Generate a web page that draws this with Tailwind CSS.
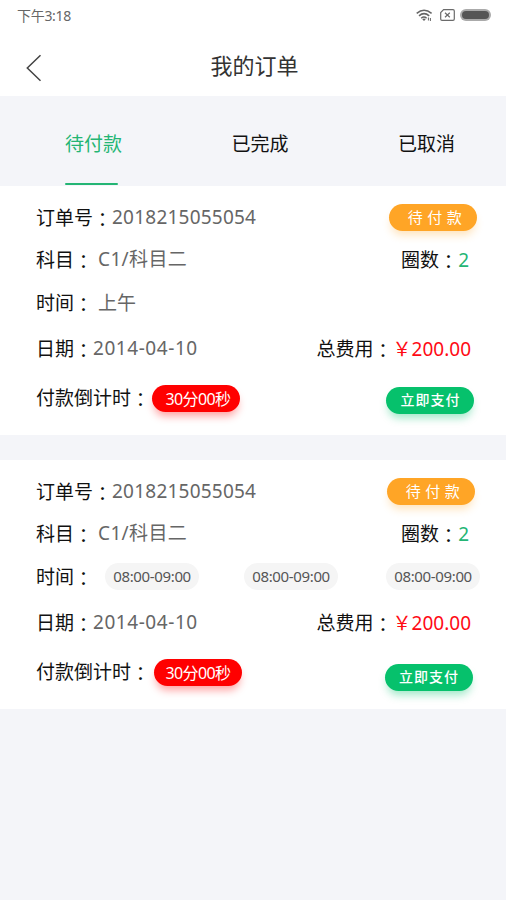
<!DOCTYPE html>
<html lang="zh-CN">
<head>
<meta charset="utf-8">
<meta name="viewport" content="width=device-width, initial-scale=1">
<title>我的订单</title>
<script src="https://cdn.jsdelivr.net/npm/@tailwindcss/browser@4"></script>
</head>
<body class="bg-[#f4f5f9] font-['Noto_Sans','Noto_Sans_CJK_SC',sans-serif] text-[19px] leading-none text-[#111] w-[506px] h-[900px] overflow-hidden">
<div class="bg-white h-[96px]">
  <div class="h-[31px] flex items-center pl-[17px] pr-[15px] text-[#666]">
    <span class="text-[14px] tracking-[-0.3px]">下午3:18</span>
    <svg class="ml-auto w-[17px] h-[13px]" viewBox="0 0 17 13" fill="none" stroke="#666" stroke-width="1.5">
      <path d="M.7 4.4Q8 -1.8 15.6 4.4M3 6.9Q8 2.4 13.2 6.9M5.2 9.2Q8 6.7 10.6 9.2"/>
      <path d="M6.3 10.2L8 12L9.7 10.2Q8 9 6.3 10.2Z" fill="#666" stroke="none"/>
      <path d="M12.4 8.5v3M14.4 9v3" stroke-width="1"/>
    </svg>
    <svg class="ml-[7px] w-[15px] h-[12px] -mt-px" viewBox="0 0 15 12" fill="none" stroke="#6b6b6b" stroke-width="1.2">
      <path d="M3.6.7H13Q14.3.7 14.3 2V10Q14.3 11.3 13 11.3H2Q.7 11.3.7 10V3.6Z"/>
      <path d="M5 3.8L9.8 8.2M9.8 3.8L5 8.2"/>
    </svg>
    <div class="ml-[5px] w-[31px] h-[12px] -mt-px rounded-full bg-[#aaa] p-[2px]"><div class="h-full rounded-full bg-[#555]"></div></div>
  </div>
  <div class="h-[68px] mt-px grid grid-cols-3 items-center pl-[26px] pr-[23px] text-[#333]">
    <svg class="w-[16px] h-[28px] mt-[4px]" viewBox="0 0 16 28" fill="none" stroke="#444" stroke-width="1.5"><path d="M14.5 1.2L1.3 14L14.5 26.8"/></svg>
    <h1 class="text-[22px] justify-self-center whitespace-nowrap -mt-[2px]">我的订单</h1>
  </div>
</div>
<nav class="h-[90px] flex justify-between pl-[65px] pr-[51px]">
  <div class="h-full flex flex-col items-start justify-between pt-[39px] text-[#24b574]">待付款<span class="w-[53px] h-[2px] mb-[1px] rounded-full bg-[#24b574]"></span></div>
  <div class="pt-[39px]">已完成</div>
  <div class="pt-[39px]">已取消</div>
</nav>

<section class="bg-white h-[249px] pt-[10px] pl-[36px]">
  <div class="h-[42px] flex items-center"><span>订单号<span lang="zh-TW" class="inline-block translate-y-[2px] font-['Noto_Sans_CJK_TC']">：</span></span><span class="text-[#666] tracking-[0.22px]">2018215055054</span>
    <span class="ml-auto mr-[29px] w-[88px] h-[27px] rounded-full bg-[#ffa526] shadow-[0_6px_9px_-2px_#ffa52650] text-white text-[15px] tracking-[4.5px] pl-[8px] flex items-center justify-center">待付款</span></div>
  <div class="h-[43px] flex items-center"><span>科目<span lang="zh-TW" class="inline-block translate-y-[2px] font-['Noto_Sans_CJK_TC']">：</span></span><span class="ml-[5px] text-[#666] tracking-[0.35px]">C1/科目二</span>
    <span class="ml-auto mr-[37px]">圈数<span lang="zh-TW" class="inline-block translate-y-[2px] font-['Noto_Sans_CJK_TC']">：</span><span class="text-[#24b574]">2</span></span></div>
  <div class="h-[43px] flex items-center"><span>时间<span lang="zh-TW" class="inline-block translate-y-[2px] font-['Noto_Sans_CJK_TC']">：</span></span><span class="ml-[5px] mt-[2px] text-[#666]">上午</span></div>
  <div class="h-[49px] flex items-center"><span>日期<span lang="zh-TW" class="inline-block translate-y-[2px] font-['Noto_Sans_CJK_TC']">：</span></span><span class="text-[#666] tracking-[0.55px]">2014-04-10</span>
    <span class="ml-auto mr-[35px]">总费用<span lang="zh-TW" class="inline-block translate-y-[2px] font-['Noto_Sans_CJK_TC']">：</span><span class="text-[#ff0a14]">￥200.00</span></span></div>
  <div class="h-[50px] flex items-center"><span class="-mt-[2px]">付款倒计时<span lang="zh-TW" class="inline-block translate-y-[2px] font-['Noto_Sans_CJK_TC']">：</span></span>
    <span class="ml-[2px] mt-[1px] w-[88px] h-[27px] rounded-full bg-[#ff0000] shadow-[0_6px_9px_-2px_#ff000060] text-white text-[16px] tracking-[-0.6px] pl-[4px] flex items-center justify-center">30分00秒</span>
    <span class="ml-auto mt-[4px] mr-[32px] w-[88px] h-[27px] rounded-full bg-[#06c16c] shadow-[0_6px_9px_-2px_#06c16c60] text-white text-[14px] font-medium tracking-[1px] pl-[1px] flex items-center justify-center">立即支付</span></div>
</section>

<section class="mt-[25px] bg-white h-[249px] pt-[10px] pl-[36px]">
  <div class="h-[42px] flex items-center"><span>订单号<span lang="zh-TW" class="inline-block translate-y-[2px] font-['Noto_Sans_CJK_TC']">：</span></span><span class="text-[#666] tracking-[0.22px]">2018215055054</span>
    <span class="ml-auto mr-[31px] w-[88px] h-[27px] rounded-full bg-[#ffa526] shadow-[0_6px_9px_-2px_#ffa52650] text-white text-[15px] tracking-[4.5px] pl-[8px] flex items-center justify-center">待付款</span></div>
  <div class="h-[43px] flex items-center"><span>科目<span lang="zh-TW" class="inline-block translate-y-[2px] font-['Noto_Sans_CJK_TC']">：</span></span><span class="ml-[5px] text-[#666] tracking-[0.35px]">C1/科目二</span>
    <span class="ml-auto mr-[37px]">圈数<span lang="zh-TW" class="inline-block translate-y-[2px] font-['Noto_Sans_CJK_TC']">：</span><span class="text-[#24b574]">2</span></span></div>
  <div class="h-[43px] flex items-center"><span>时间<span lang="zh-TW" class="inline-block translate-y-[2px] font-['Noto_Sans_CJK_TC']">：</span></span>
    <span class="ml-[12px] w-[94px] h-[27px] rounded-full bg-[#f5f5f5] text-[#555] text-[15px] tracking-[-0.35px] flex items-center justify-center">08:00-09:00</span>
    <span class="ml-[45px] w-[94px] h-[27px] rounded-full bg-[#f5f5f5] text-[#555] text-[15px] tracking-[-0.35px] flex items-center justify-center">08:00-09:00</span>
    <span class="ml-[48px] w-[94px] h-[27px] rounded-full bg-[#f5f5f5] text-[#555] text-[15px] tracking-[-0.35px] flex items-center justify-center">08:00-09:00</span></div>
  <div class="h-[49px] flex items-center"><span>日期<span lang="zh-TW" class="inline-block translate-y-[2px] font-['Noto_Sans_CJK_TC']">：</span></span><span class="text-[#666] tracking-[0.55px]">2014-04-10</span>
    <span class="ml-auto mr-[35px]">总费用<span lang="zh-TW" class="inline-block translate-y-[2px] font-['Noto_Sans_CJK_TC']">：</span><span class="text-[#ff0a14]">￥200.00</span></span></div>
  <div class="h-[50px] flex items-center"><span class="-mt-[2px]">付款倒计时<span lang="zh-TW" class="inline-block translate-y-[2px] font-['Noto_Sans_CJK_TC']">：</span></span>
    <span class="ml-[4px] mt-[1px] w-[88px] h-[27px] rounded-full bg-[#ff0000] shadow-[0_6px_9px_-2px_#ff000060] text-white text-[16px] tracking-[-0.6px] flex items-center justify-center">30分00秒</span>
    <span class="ml-auto mt-[10px] mr-[33px] w-[88px] h-[27px] rounded-full bg-[#06c16c] shadow-[0_6px_9px_-2px_#06c16c60] text-white text-[14px] font-medium tracking-[1px] flex items-center justify-center">立即支付</span></div>
</section>
</body>
</html>
